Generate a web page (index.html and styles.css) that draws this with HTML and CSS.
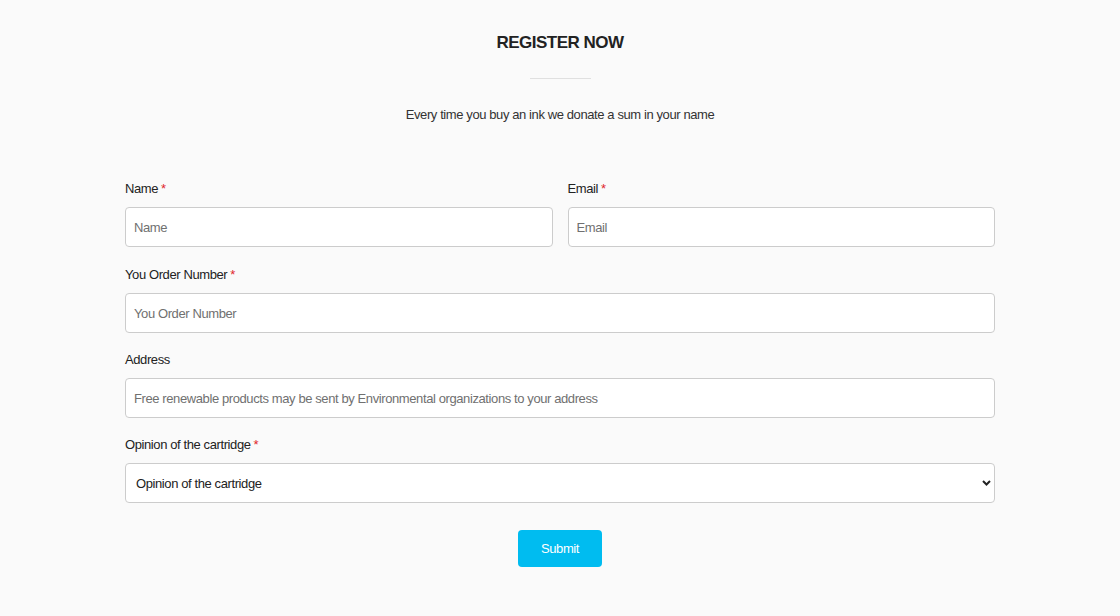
FILE: index.html
```html
<!DOCTYPE html>
<html>
<head>
<meta charset="utf-8">
<link rel="stylesheet" href="styles.css">
</head>
<body>
<main class="page">
  <header class="head">
    <h1 class="title">REGISTER NOW</h1>
    <div class="divider"></div>
    <p class="sub">Every time you buy an ink we donate a sum in your name</p>
  </header>
  <form class="form">
    <div class="row two">
      <div class="field">
        <label class="label">Name<span class="req">*</span></label>
        <input class="input" type="text" placeholder="Name">
      </div>
      <div class="field">
        <label class="label">Email<span class="req">*</span></label>
        <input class="input" type="text" placeholder="Email">
      </div>
    </div>
    <div class="field">
      <label class="label">You Order Number<span class="req">*</span></label>
      <input class="input" type="text" placeholder="You Order Number">
    </div>
    <div class="field">
      <label class="label">Address</label>
      <input class="input" type="text" placeholder="Free renewable products may be sent by Environmental organizations to your address">
    </div>
    <div class="field">
      <label class="label">Opinion of the cartridge<span class="req">*</span></label>
      <div class="selectwrap">
        <select class="input select">
          <option>Opinion of the cartridge</option>
        </select>
        <svg class="chev" width="9" height="6" viewBox="0 0 9 6"><path d="M1 1l3.5 3.5L8 1" fill="none" stroke="#222" stroke-width="2"/></svg>
      </div>
    </div>
    <div class="actions">
      <button class="btn" type="button">Submit</button>
    </div>
  </form>
</main>
</body>
</html>
```

FILE: styles.css
```css
* { box-sizing: border-box; }
html, body { margin: 0; padding: 0; }
body {
  background: #fafafa;
  font-family: "Liberation Sans", Arial, sans-serif;
  letter-spacing: -0.4px;
  color: #333;
  width: 1120px;
  height: 616px;
  overflow: hidden;
}
.page { width: 870px; margin: 0 auto; padding-top: 32px; }
.head { display: flex; flex-direction: column; align-items: center; }
.title {
  margin: 0;
  font-size: 17px;
  letter-spacing: -0.5px;
  font-weight: bold;
  line-height: 22px;
  color: #222;
}
.divider { width: 61px; height: 1px; background: #e0e0e0; margin-top: 24px; }
.sub { margin: 27px 0 0; font-size: 13px; line-height: 18px; color: #333; }
.form { margin-top: 56px; display: flex; flex-direction: column; gap: 18px; }
.row.two { display: grid; grid-template-columns: 1fr 1fr; gap: 15px; margin-bottom: 1px; }
.field { display: flex; flex-direction: column; }
.label { font-size: 13px; line-height: 18px; margin-bottom: 9px; color: #222; }
.req { color: #e0262b; margin-left: 3px; }
.input {
  height: 40px;
  width: 100%;
  border: 1px solid #cccccc;
  border-radius: 4px;
  background: #fff;
  padding: 0 8px;
  font-family: inherit;
  letter-spacing: -0.4px;
  font-size: 13px;
  color: #333;
  outline: none;
}
.input::placeholder { color: #707070; }
.selectwrap { position: relative; }
.select { appearance: none; -webkit-appearance: none; padding-left: 10px; color: #222; }
.chev { position: absolute; right: 4px; top: 17px; pointer-events: none; }
.actions { display: flex; justify-content: center; margin-top: 9px; }
.btn {
  width: 84px;
  height: 37px;
  border: none;
  border-radius: 4px;
  background: #00bcf0;
  color: #fff;
  font-family: inherit;
  letter-spacing: -0.4px;
  font-size: 13px;
}
```
